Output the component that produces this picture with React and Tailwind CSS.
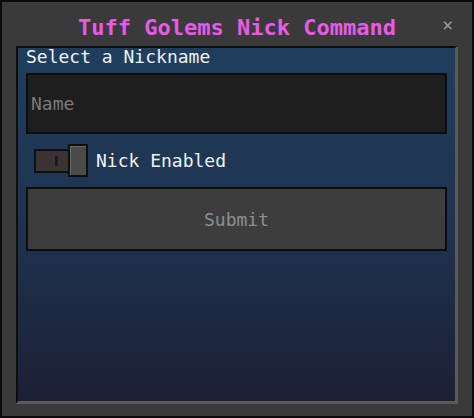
export default function App() {
	return (
		<div className="w-[474px] h-[418px] bg-[#0b0b0b] p-[2px] font-['DejaVu_Sans_Mono',monospace]">
			<div className="flex flex-col w-full h-full bg-[#3a3a3a] pl-[14px] pr-[14px] pb-[12px]">
				{/* title bar */}
				<div className="relative flex items-center justify-center h-[44px] shrink-0 pt-[8px]">
					<h1 className="text-[22px] font-bold leading-none text-[#e95ae8]">
						Tuff Golems Nick Command
					</h1>
					<span className="absolute right-[5px] top-[14px] text-[18px] leading-none text-[#9a9a9a]">×</span>
				</div>
				{/* panel */}
				<div className="flex-1 flex flex-col border-t-2 border-l-2 border-[#0e0e0e] border-b-[3px] border-r-[3px] border-b-[#5a5a5a] border-r-[#5a5a5a] bg-linear-to-b from-[#1f3e5e] via-[#1f3350] to-[#1c2036] px-[8px]">
					<p className="text-[18px] leading-[18px] text-[#f2f2f2]">Select a Nickname</p>
					<div className="mt-[7px] h-[61px] flex items-center border-2 border-[#0d0d0d] bg-[#1e1e1e] pl-[3px]">
						<span className="text-[18px] text-[#7a7a7a]">Name</span>
					</div>
					<div className="mt-[10px] flex items-center h-[33px] pl-[8px]">
						<div className="relative flex items-center w-[54px] h-[33px]">
							<div className="w-[36px] h-[24px] border-2 border-[#0f0f0f] bg-[#3b3331] flex items-center justify-center pl-[8px]">
								<div className="w-[3px] h-[10px] bg-[#1f1a19]"></div>
							</div>
							<div className="absolute left-[34px] top-0 w-[20px] h-[33px] border-2 border-[#0f0f0f] bg-[#4a4a4a] shadow-[inset_1px_1px_0_#6a6a6a]"></div>
						</div>
						<span className="ml-[8px] text-[18px] text-[#f2f2f2]">Nick Enabled</span>
					</div>
					<button className="mt-[10px] h-[64px] w-full border-2 border-[#0d0d0d] bg-[#3d3d3d] text-[18px] text-[#8e8e8e]">
						Submit
					</button>
				</div>
			</div>
		</div>
	);
}
